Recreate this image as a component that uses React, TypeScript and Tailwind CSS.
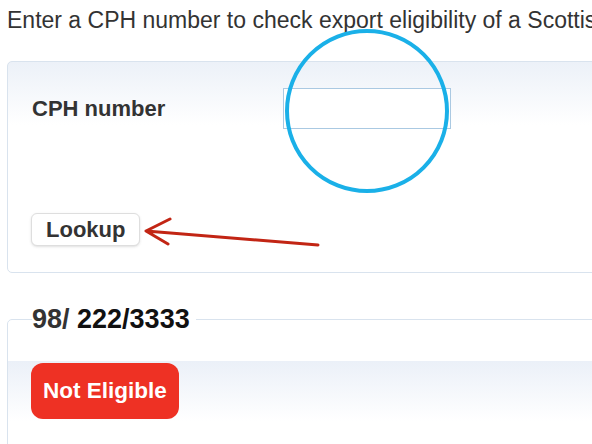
import React from 'react'

export default function App() {
  return (
    <div className="relative w-[592px] h-[444px] overflow-hidden bg-white font-['Liberation_Sans',Arial,sans-serif] text-[#333]">
      {/* intro line */}
      <p className="pl-[7px] pt-[7px] text-[23px] leading-[26px] whitespace-nowrap">
        Enter a CPH number to check export eligibility of a Scottish holding
      </p>

      {/* lookup form */}
      <div className="mt-[28px] ml-[7px] w-[700px] h-[212px] border border-[#d9e3ee] rounded-[5px] bg-linear-to-b from-[#ecf1f8] to-white to-30% pl-[24px] pt-[26px]">
        <div className="flex items-center">
          <label htmlFor="cph" className="w-[251px] text-[22px] font-bold">
            CPH number
          </label>
          <input
            id="cph"
            type="text"
            className="w-[168px] h-[41px] border border-[#aac9e2] bg-white outline-none"
          />
        </div>
        <button className="mt-[84px] -ml-px h-[33px] px-[14px] rounded-[6px] border border-[#dedede] bg-white shadow-sm text-[22px] font-bold leading-none">
          Lookup
        </button>
      </div>

      {/* result */}
      <fieldset className="mt-[26px] ml-[7px] w-[700px] h-[200px] border border-[#d9e3ee] rounded-[5px] p-0">
        <legend className="ml-[24px] pr-[6px] text-[27px] font-bold">
          <span className="text-[#333]">98/ </span>
          <span className="text-[#111]">222/3333</span>
        </legend>
        <div className="mt-[21px] h-[120px] bg-linear-to-b from-[#ebf0f8] to-white to-50% pl-[23px] pt-[2px]">
          <span className="inline-flex items-center h-[56px] px-[12px] rounded-[12px] bg-[#ee3124] text-white text-[22.5px] font-bold">
            Not Eligible
          </span>
        </div>
      </fieldset>

      {/* annotations */}
      <svg className="absolute inset-0 pointer-events-none" width="592" height="444" viewBox="0 0 592 444">
        <circle cx="367" cy="111" r="80" fill="none" stroke="#1ab0e8" strokeWidth="4" />
        <path
          d="M318 245 L146 231 M170 219 L146 231 L168 244"
          fill="none"
          stroke="#c22514"
          strokeWidth="3"
          strokeLinecap="round"
          strokeLinejoin="round"
        />
      </svg>
    </div>
  )
}
